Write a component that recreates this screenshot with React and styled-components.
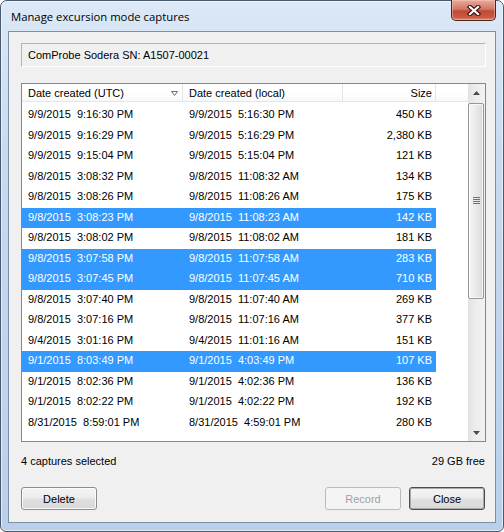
import React from 'react'
import styled, { createGlobalStyle } from 'styled-components'

const GlobalStyle = createGlobalStyle`
  html, body { margin: 0; padding: 0; background: #ffffff; }
  #root { width: 504px; height: 532px; }
`;

const Frame = styled.div`
  box-sizing: border-box;
  width: 504px;
  height: 532px;
  border: 1px solid #4a5a6e;
  border-radius: 7px 7px 6px 6px;
  background: linear-gradient(180deg, #dce8f6 0%, #c6daf0 30%, #bad0ea 100%);
  box-shadow: inset 0 0 0 1px rgba(255, 255, 255, 0.55);
  display: flex;
  flex-direction: column;
  padding: 0 7px 8px 7px;
`;

const TitleBar = styled.div`
  height: 30px;
  display: flex;
  align-items: flex-start;
`;

const Title = styled.div`
  padding: 8px 0 0 3px;
  line-height: 16px;
  font-family: "Open Sans", "Liberation Sans", sans-serif;
  font-size: 11.3px;
  color: #000;
`;

const CloseBtn = styled.div`
  margin-left: auto;
  margin-top: -1px;
  box-sizing: border-box;
  width: 45px;
  height: 21px;
  border: 1px solid #4f211b;
  border-top: none;
  border-radius: 0 0 5px 5px;
  background: linear-gradient(180deg, #e9a99b 0%, #d47867 45%, #c14a34 55%, #c65a40 85%, #d98a6c 100%);
  box-shadow: inset 0 0 0 1px rgba(255, 210, 200, 0.45);
  display: flex;
  align-items: center;
  justify-content: center;
`;

const Client = styled.div`
  flex: 1;
  display: flex;
  flex-direction: column;
  border: 1px solid #7d8fa6;
  background: #f0f0f0;
  padding: 11px 9px 0 12px;
  font-family: "Liberation Sans", Arial, sans-serif;
  font-size: 11px;
  color: #000;
`;

const SNBox = styled.div`
  box-sizing: border-box;
  height: 24px;
  border: 1px solid;
  border-color: #b4b4b4 #ffffff #ffffff #b4b4b4;
  padding-left: 6px;
  line-height: 22px;
`;

const List = styled.div`
  box-sizing: border-box;
  margin-top: 16px;
  height: 359px;
  border: 1px solid #828790;
  background: #ffffff;
  display: grid;
  grid-template-columns: 1fr 17px;
  overflow: hidden;
`;

const ListMain = styled.div`
  display: flex;
  flex-direction: column;
  overflow: hidden;
`;

const Header = styled.div`
  box-sizing: border-box;
  height: 18px;
  display: grid;
  grid-template-columns: 161px 160px 93px 1fr;
  background: linear-gradient(180deg, #ffffff 0%, #ffffff 50%, #f7f8f9 100%);
  border-bottom: 1px solid #e3e6ea;
`;

const HeadCell = styled.div`
  box-sizing: border-box;
  display: flex;
  align-items: center;
  justify-content: ${p => (p.$right ? 'flex-end' : 'space-between')};
  border-right: ${p => (p.$last ? 'none' : '1px solid #e5e5e5')};
  padding: 1px ${p => (p.$right ? '3px' : '4px')} 0 6px;
  line-height: 16px;
  white-space: pre;
`;

const Rows = styled.div`
  padding-top: 3px;
`;

const Row = styled.div`
  width: 414px;
  height: 20.5px;
  display: grid;
  grid-template-columns: 161px 160px 93px;
  line-height: 19px;
  background: ${p => (p.$selected ? '#3399ff' : 'transparent')};
  color: ${p => (p.$selected ? '#ffffff' : '#000000')};
`;

const Cell = styled.div`
  padding: 0 ${p => (p.$right ? '4px' : '0')} 0 6px;
  text-align: ${p => (p.$right ? 'right' : 'left')};
  white-space: pre;
`;

const ScrollBar = styled.div`
  display: flex;
  flex-direction: column;
  background: linear-gradient(90deg, #e2e2e2 0%, #ececec 40%, #f2f2f2 100%);
`;

const ScrollArrow = styled.div`
  height: 17px;
  display: flex;
  align-items: center;
  justify-content: center;
  margin-top: ${p => (p.$bottom ? 'auto' : '0')};
`;

const Thumb = styled.div`
  box-sizing: border-box;
  margin: 2px 1px 0 0;
  height: 196px;
  border: 1px solid #979797;
  border-radius: 2px;
  background: linear-gradient(90deg, #f5f5f5 0%, #ebebeb 45%, #d9d9d9 100%);
  box-shadow: inset 0 0 0 1px rgba(255, 255, 255, 0.7);
  display: flex;
  align-items: center;
  justify-content: center;
`;

const Status = styled.div`
  margin-top: 12px;
  display: flex;
  justify-content: space-between;
  line-height: 14px;
  padding-right: 1px;
`;

const ButtonRow = styled.div`
  margin-top: 19px;
  display: flex;
  gap: 8px;
  padding-right: 1px;
`;

const Button = styled.button`
  box-sizing: border-box;
  width: 76px;
  height: 23px;
  padding: 0;
  margin-left: ${p => (p.$push ? 'auto' : '0')};
  border: 1px solid ${p => (p.disabled ? '#b8bcbf' : p.$default ? '#4d4d4d' : '#8c8c8c')};
  border-radius: 3px;
  background: ${p => (p.disabled
    ? '#f4f4f4'
    : 'linear-gradient(180deg, #f4f4f4 0%, #ececec 48%, #e0e0e0 52%, #d8d8d8 100%)')};
  box-shadow: ${p => (p.disabled ? 'none' : p.$default ? 'inset 0 0 0 1px #a9a9a9' : 'inset 0 0 0 1px #fbfbfb')};
  font-family: "Liberation Sans", Arial, sans-serif;
  font-size: 11px;
  color: ${p => (p.disabled ? '#a0a0a0' : '#000000')};
`;

const captures = [
  ['9/9/2015  9:16:30 PM', '9/9/2015  5:16:30 PM', '450 KB'],
  ['9/9/2015  9:16:29 PM', '9/9/2015  5:16:29 PM', '2,380 KB'],
  ['9/9/2015  9:15:04 PM', '9/9/2015  5:15:04 PM', '121 KB'],
  ['9/8/2015  3:08:32 PM', '9/8/2015  11:08:32 AM', '134 KB'],
  ['9/8/2015  3:08:26 PM', '9/8/2015  11:08:26 AM', '175 KB'],
  ['9/8/2015  3:08:23 PM', '9/8/2015  11:08:23 AM', '142 KB', true],
  ['9/8/2015  3:08:02 PM', '9/8/2015  11:08:02 AM', '181 KB'],
  ['9/8/2015  3:07:58 PM', '9/8/2015  11:07:58 AM', '283 KB', true],
  ['9/8/2015  3:07:45 PM', '9/8/2015  11:07:45 AM', '710 KB', true],
  ['9/8/2015  3:07:40 PM', '9/8/2015  11:07:40 AM', '269 KB'],
  ['9/8/2015  3:07:16 PM', '9/8/2015  11:07:16 AM', '377 KB'],
  ['9/4/2015  3:01:16 PM', '9/4/2015  11:01:16 AM', '151 KB'],
  ['9/1/2015  8:03:49 PM', '9/1/2015  4:03:49 PM', '107 KB', true],
  ['9/1/2015  8:02:36 PM', '9/1/2015  4:02:36 PM', '136 KB'],
  ['9/1/2015  8:02:22 PM', '9/1/2015  4:02:22 PM', '192 KB'],
  ['8/31/2015  8:59:01 PM', '8/31/2015  4:59:01 PM', '280 KB'],
];

function CloseGlyph() {
  return (
    <svg width="14" height="11" viewBox="0 0 14 11">
      <path d="M3 2 L11 9 M11 2 L3 9" stroke="#3b1410" strokeWidth="4.4" strokeLinecap="square" />
      <path d="M3 2 L11 9 M11 2 L3 9" stroke="#ffffff" strokeWidth="2.3" strokeLinecap="square" />
    </svg>
  );
}

function SortGlyph() {
  return (
    <svg width="7" height="5" viewBox="0 0 7 5">
      <path d="M0.5 0.5 H6.5 L3.5 4.5 Z" fill="none" stroke="#5f6f80" strokeWidth="1" />
    </svg>
  );
}

function Arrow({ down }) {
  return (
    <svg width="7" height="4" viewBox="0 0 7 4">
      <path d={down ? 'M0 0 H7 L3.5 4 Z' : 'M0 4 H7 L3.5 0 Z'} fill="#4a4a4a" />
    </svg>
  );
}

function Grip() {
  return (
    <svg width="7" height="8" viewBox="0 0 7 8">
      {[0, 2, 4, 6].map(y => (
        <rect key={y} x="0" y={y} width="7" height="1" fill="#707070" />
      ))}
    </svg>
  );
}

export default function App() {
  return (
    <>
      <GlobalStyle />
      <Frame>
        <TitleBar>
          <Title>Manage excursion mode captures</Title>
          <CloseBtn><CloseGlyph /></CloseBtn>
        </TitleBar>
        <Client>
          <SNBox>ComProbe Sodera SN: A1507-00021</SNBox>
          <List>
            <ListMain>
              <Header>
                <HeadCell>Date created (UTC)<SortGlyph /></HeadCell>
                <HeadCell>Date created (local)</HeadCell>
                <HeadCell $right>Size</HeadCell>
                <HeadCell $last />
              </Header>
              <Rows>
                {captures.map(([utc, local, size, sel]) => (
                  <Row key={utc} $selected={sel}>
                    <Cell>{utc}</Cell>
                    <Cell>{local}</Cell>
                    <Cell $right>{size}</Cell>
                  </Row>
                ))}
              </Rows>
            </ListMain>
            <ScrollBar>
              <ScrollArrow><Arrow /></ScrollArrow>
              <Thumb><Grip /></Thumb>
              <ScrollArrow $bottom><Arrow down /></ScrollArrow>
            </ScrollBar>
          </List>
          <Status>
            <span>4 captures selected</span>
            <span>29 GB free</span>
          </Status>
          <ButtonRow>
            <Button>Delete</Button>
            <Button $push disabled>Record</Button>
            <Button $default>Close</Button>
          </ButtonRow>
        </Client>
      </Frame>
    </>
  )
}
